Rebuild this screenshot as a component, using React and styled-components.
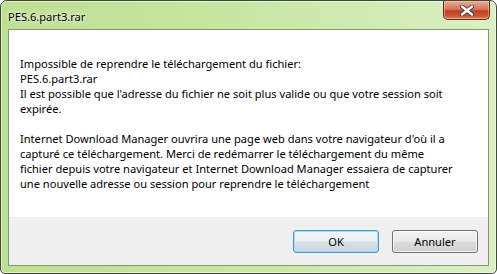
import React from "react";
import styled, { createGlobalStyle } from "styled-components";

const GlobalStyle = createGlobalStyle`
  html, body {
    margin: 0;
    padding: 0;
    background: #ffffff;
  }
  body {
    font-family: "Segoe UI", "Noto Sans", "Liberation Sans", sans-serif;
  }
`;

const Window = styled.div`
  box-sizing: border-box;
  width: 497px;
  height: 274px;
  border: 1px solid #3d4a38;
  border-radius: 7px 7px 5px 5px;
  background: linear-gradient(
    90deg,
    #bde093 0%,
    #c4e59c 35%,
    #cfeab0 70%,
    #dbf0c4 100%
  );
  box-shadow: inset 0 0 0 1px rgba(255, 255, 255, 0.55);
  display: flex;
  flex-direction: column;
  padding: 0 7px 7px 7px;
  overflow: hidden;
`;

const TitleBar = styled.div`
  height: 28px;
  margin: 0 -1px 0 0;
  display: flex;
  align-items: flex-start;
`;

const Title = styled.span`
  font-size: 11.1px;
  line-height: 15px;
  color: #000;
  padding-top: 8px;
  text-shadow: 0 0 6px rgba(255, 255, 255, 0.9), 0 0 3px rgba(255, 255, 255, 0.9);
`;

const CloseButton = styled.div`
  margin-left: auto;
  box-sizing: border-box;
  width: 47px;
  height: 19px;
  border: 1px solid #5b2b22;
  border-top: none;
  border-radius: 0 0 5px 5px;
  background: linear-gradient(
    180deg,
    #e9a893 0%,
    #d8775c 45%,
    #c23f1c 55%,
    #cc5a36 85%,
    #e08a68 100%
  );
  box-shadow: inset 0 0 0 1px rgba(255, 220, 200, 0.45);
  display: flex;
  align-items: center;
  justify-content: center;
`;

const Client = styled.div`
  flex: 1;
  border: 1px solid #7f9a6c;
  background: #ffffff;
  display: flex;
  flex-direction: column;
  min-height: 0;
`;

const Message = styled.div`
  flex: 1;
  padding: 26px 11px 0 11px;
  font-size: 11.1px;
  line-height: 15px;
  color: #000;
`;

const Line = styled.div`
  white-space: pre;
  height: 15px;
`;

const Footer = styled.div`
  height: 48px;
  background: #f0f0f0;
  display: flex;
  justify-content: flex-end;
  align-items: flex-start;
  gap: 13px;
  padding: 13px 10px 0 0;
  box-sizing: border-box;
`;

const Button = styled.button`
  box-sizing: border-box;
  width: 86px;
  height: 23px;
  padding: 0;
  font-family: inherit;
  font-size: 11.1px;
  color: #000;
  border-radius: 3px;
  border: 1px solid ${(p) => (p.$default ? "#3c9ad3" : "#707070")};
  background: ${(p) =>
    p.$default
      ? "linear-gradient(180deg, #f4f8fb 0%, #e8eef2 48%, #d6e0e6 52%, #cad6de 100%)"
      : "linear-gradient(180deg, #f2f2f2 0%, #ebebeb 48%, #dddddd 52%, #cfcfcf 100%)"};
  box-shadow: inset 0 0 0 1px
    ${(p) => (p.$default ? "#a8ddf7" : "rgba(255, 255, 255, 0.75)")};
  cursor: default;
`;

const lines = [
  "Impossible de reprendre le téléchargement du fichier:",
  "PES.6.part3.rar",
  "Il est possible que l'adresse du fichier ne soit plus valide ou que votre session soit",
  "expirée.",
  "",
  "Internet Download Manager ouvrira une page web dans votre navigateur d'où il a",
  "capturé ce téléchargement. Merci de redémarrer le téléchargement du même",
  "fichier depuis votre navigateur et Internet Download Manager essaiera de capturer",
  "une nouvelle adresse ou session pour reprendre le téléchargement",
];

const App = () => {
  return (
    <>
      <GlobalStyle />
      <Window>
        <TitleBar>
          <Title>PES.6.part3.rar</Title>
          <CloseButton>
            <svg width="14" height="11" viewBox="0 0 14 11">
              <path
                d="M2 1.5 L12 9.5 M12 1.5 L2 9.5"
                stroke="#3a3a3a"
                strokeWidth="4.2"
                strokeLinecap="round"
              />
              <path
                d="M2 1.5 L12 9.5 M12 1.5 L2 9.5"
                stroke="#ffffff"
                strokeWidth="2.4"
                strokeLinecap="round"
              />
            </svg>
          </CloseButton>
        </TitleBar>
        <Client>
          <Message>
            {lines.map((l, i) => (
              <Line key={i}>{l}</Line>
            ))}
          </Message>
          <Footer>
            <Button $default>OK</Button>
            <Button>Annuler</Button>
          </Footer>
        </Client>
      </Window>
    </>
  );
};

export default App;
